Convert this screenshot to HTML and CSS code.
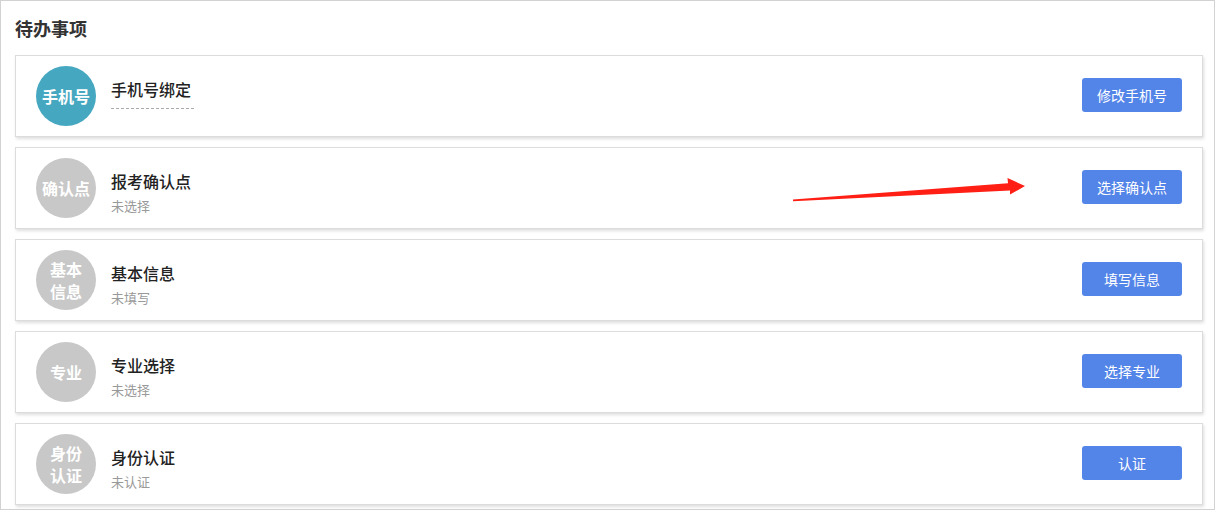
FILE: index.html
```html
<!DOCTYPE html>
<html lang="zh">
<head>
<meta charset="utf-8">
<title>待办事项</title>
<link rel="stylesheet" href="styles.css">
</head>
<body>
<div class="page">
  <h1 class="title">待办事项</h1>
  <div class="card">
    <div class="badge teal">手机号</div>
    <div class="info">
      <div class="name">手机号绑定</div>
      <div class="masked"></div>
    </div>
    <button class="btn">修改手机号</button>
  </div>
  <div class="card">
    <div class="badge">确认点</div>
    <div class="info">
      <div class="name">报考确认点</div>
      <div class="sub">未选择</div>
    </div>
    <button class="btn">选择确认点</button>
  </div>
  <div class="card">
    <div class="badge two">基本<br>信息</div>
    <div class="info">
      <div class="name">基本信息</div>
      <div class="sub">未填写</div>
    </div>
    <button class="btn">填写信息</button>
  </div>
  <div class="card">
    <div class="badge">专业</div>
    <div class="info">
      <div class="name">专业选择</div>
      <div class="sub">未选择</div>
    </div>
    <button class="btn">选择专业</button>
  </div>
  <div class="card">
    <div class="badge two">身份<br>认证</div>
    <div class="info">
      <div class="name">身份认证</div>
      <div class="sub">未认证</div>
    </div>
    <button class="btn">认证</button>
  </div>
  <svg class="arrow" width="1215" height="510" viewBox="0 0 1215 510">
    <polygon points="793,199.6 1008,183.2 1007.5,178 1025,186 1010,194.6 1010,190.6 793,201.2" fill="#ff1f14"/>
  </svg>
</div>
</body>
</html>
```
FILE: styles.css
```css
* { box-sizing: border-box; }
html, body { margin: 0; padding: 0; background: #fff; }
body {
  font-family: "Microsoft YaHei", "Noto Sans CJK SC", sans-serif;
  color: #333;
}
.page {
  position: relative;
  width: 1215px;
  height: 510px;
  border: 1px solid #d2d2d2;
  padding: 0 11px 0 14px;
  overflow: hidden;
}
.title {
  margin: 0;
  height: 54px;
  line-height: 54px;
  font-size: 18px;
  font-weight: bold;
  color: #333;
}
.card {
  display: flex;
  align-items: center;
  height: 82px;
  margin-bottom: 10px;
  border: 1px solid #dcdcdc;
  box-shadow: 1px 2px 3px rgba(0, 0, 0, 0.13);
  padding: 0 20px 0 20px;
  background: #fff;
}
.badge {
  flex: none;
  width: 60px;
  height: 60px;
  border-radius: 50%;
  background: #c8c8c8;
  color: #fff;
  font-size: 16px;
  font-weight: bold;
  display: flex;
  align-items: center;
  justify-content: center;
  text-align: center;
  line-height: 22px;
}
.badge.teal { background: #45a8c0; }
.info {
  flex: 1;
  align-self: flex-start;
  margin-top: 21px;
  margin-left: 15px;
}
.name {
  font-size: 16px;
  line-height: 24px;
  color: #222;
  font-weight: 500;
}
.sub {
  font-size: 13px;
  line-height: 22px;
  color: #999;
  margin-top: 2px;
}
.masked {
  width: 83px;
  margin-top: 7px;
  border-top: 1px dashed #aaa;
}
.btn {
  flex: none;
  width: 100px;
  height: 34px;
  margin-bottom: 2px;
  border: none;
  border-radius: 3px;
  background: #5384e8;
  color: #fff;
  font-family: inherit;
  font-size: 14px;
  padding: 0;
}
.arrow {
  position: absolute;
  left: -1px;
  top: -1px;
  pointer-events: none;
}
```
